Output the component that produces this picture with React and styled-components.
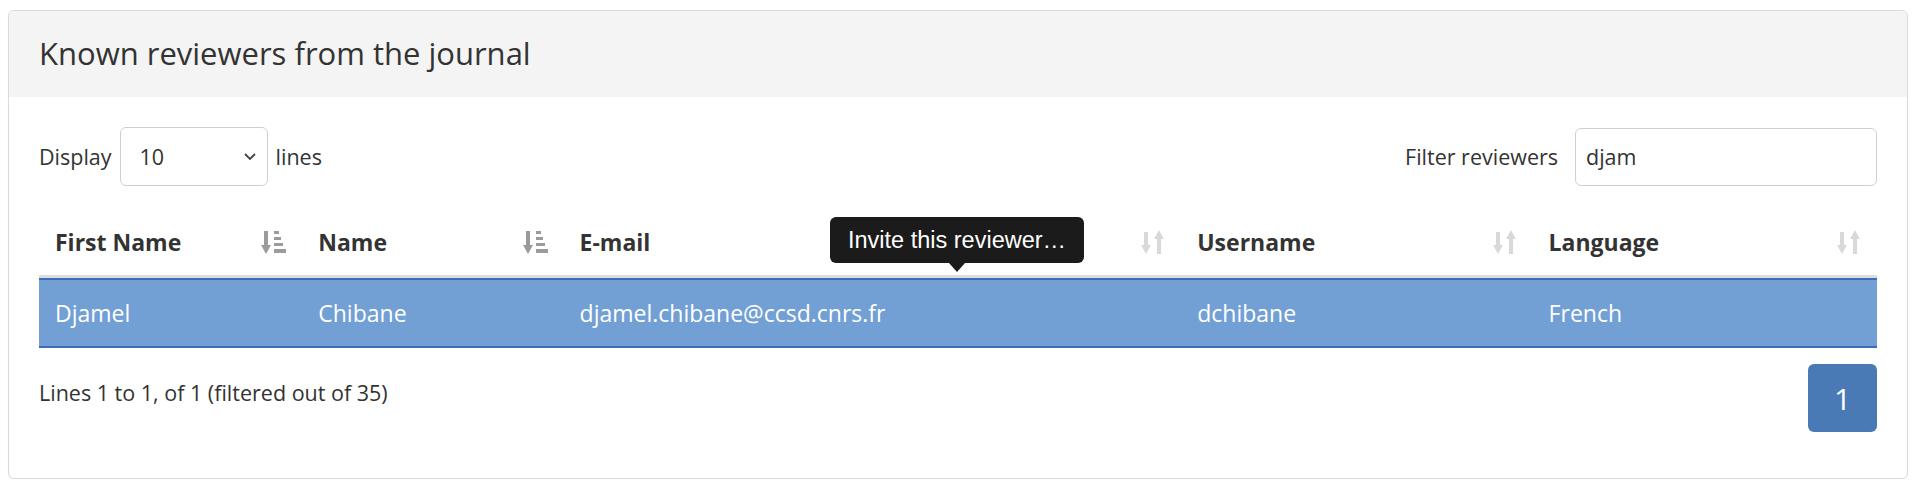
import React from "react";
import styled, { createGlobalStyle } from "styled-components";

const GlobalStyle = createGlobalStyle`
  body {
    margin: 0;
    background: #fff;
    font-family: "Open Sans", "Liberation Sans", sans-serif;
    color: #333;
  }
`;

const Card = styled.section`
  margin: 10px 8px 0 8px;
  height: 469px;
  box-sizing: border-box;
  border: 1.5px solid #dadada;
  border-radius: 6px;
  overflow: hidden;
  background: #fff;
  box-shadow: 0 1px 2px rgba(0, 0, 0, 0.04);
`;

const CardHeader = styled.header`
  height: 86px;
  box-sizing: border-box;
  padding: 0 30px 3px;
  display: flex;
  align-items: center;
  background: #f4f4f4;

  h2 {
    margin: 0;
    font-size: 31px;
    font-weight: 400;
    line-height: 36px;
    color: #333;
  }
`;

const CardBody = styled.div`
  padding: 30px 30px 0;
`;

const Controls = styled.div`
  display: flex;
  justify-content: space-between;
  align-items: center;
  height: 59px;
  font-size: 21.5px;
`;

const Group = styled.label`
  display: flex;
  align-items: center;
  gap: ${(p) => p.gap || 8}px;
`;

const Select = styled.div`
  width: 148px;
  height: 59px;
  box-sizing: border-box;
  border: 1.5px solid #cfcfcf;
  border-radius: 6px;
  padding: 0 10px 0 19px;
  display: flex;
  align-items: center;
  justify-content: space-between;
  color: #333;
`;

const Input = styled.input`
  width: 302px;
  height: 58px;
  box-sizing: border-box;
  border: 1.5px solid #cfcfcf;
  border-radius: 6px;
  padding: 0 10px;
  font-family: inherit;
  font-size: 21.5px;
  color: #333;
  outline: none;
`;

const TableWrap = styled.div`
  position: relative;
  margin-top: 23px;
`;

const Table = styled.table`
  width: 100%;
  table-layout: fixed;
  border-collapse: separate;
  border-spacing: 0;
  font-size: 23px;
`;

const Th = styled.th`
  position: relative;
  text-align: left;
  font-weight: 700;
  line-height: 36px;
  padding: 15px 48px 15px 16px;
  border-bottom: 3px solid #dddddd;
  color: #333;
  white-space: nowrap;
`;

const Td = styled.td`
  line-height: 36px;
  padding: 15px 16px;
  color: #fff;
  background: #72a0d4;
  border-top: 2px solid #3b6dbb;
  border-bottom: 2px solid #3b6dbb;
  white-space: nowrap;
`;

const SortSlot = styled.span`
  position: absolute;
  right: 16px;
  top: 50%;
  transform: translateY(-50%);
  display: flex;
`;

const Tooltip = styled.div`
  position: absolute;
  left: 791px;
  top: 8px;
  padding: 9px 18px;
  background: #1b1b1b;
  color: #fff;
  border-radius: 6px;
  font-family: "Liberation Sans", Arial, sans-serif;
  font-size: 23.5px;
  line-height: 28px;
  white-space: nowrap;

  &::after {
    content: "";
    position: absolute;
    left: 50%;
    bottom: -9px;
    transform: translateX(-50%);
    border-left: 8px solid transparent;
    border-right: 8px solid transparent;
    border-top: 9px solid #1b1b1b;
  }
`;

const Footer = styled.div`
  display: flex;
  justify-content: space-between;
  align-items: flex-start;
  margin-top: 16px;
`;

const Info = styled.div`
  padding-top: 13px;
  font-size: 21.5px;
  line-height: 31px;
  color: #333;
`;

const PageButton = styled.button`
  width: 69px;
  height: 68px;
  border: none;
  border-radius: 6px;
  background: #4a7ab5;
  color: #fff;
  font-family: inherit;
  font-size: 30px;
  display: flex;
  align-items: center;
  justify-content: center;
  padding: 0;
`;

const SortAsc = () => (
  <svg width="25" height="24" viewBox="0 0 25 24" fill="#9b9b9b">
    <rect x="3" y="1" width="4" height="15" />
    <polygon points="0,15 10,15 5,24" />
    <rect x="13" y="1" width="5" height="3" />
    <rect x="13" y="7" width="7" height="3" />
    <rect x="13" y="13" width="9" height="3" />
    <rect x="13" y="19" width="12" height="4" />
  </svg>
);

const SortBoth = () => (
  <svg width="24" height="24" viewBox="0 0 24 24" fill="#d9d9d9">
    <rect x="3" y="2" width="4" height="14" />
    <polygon points="0,15 10,15 5,24" />
    <polygon points="13,9 23,9 18,0" />
    <rect x="16" y="8" width="4" height="16" />
  </svg>
);

const Chevron = () => (
  <svg width="14" height="9" viewBox="0 0 14 9" fill="none" stroke="#444" strokeWidth="1.8">
    <polyline points="2,2 7,7 12,2" />
  </svg>
);

const columns = [
  { label: "First Name", width: 263, sorted: true },
  { label: "Name", width: 261, sorted: true },
  { label: "E-mail", width: 617 },
  { label: "Username", width: 351 },
  { label: "Language", width: 344 },
];

const row = ["Djamel", "Chibane", "djamel.chibane@ccsd.cnrs.fr", "dchibane", "French"];

export default function App() {
  return (
    <>
      <GlobalStyle />
      <Card>
        <CardHeader>
          <h2>Known reviewers from the journal</h2>
        </CardHeader>
        <CardBody>
          <Controls>
            <Group>
              Display
              <Select>
                <span>10</span>
                <Chevron />
              </Select>
              lines
            </Group>
            <Group gap={17}>
              Filter reviewers
              <Input defaultValue="djam" />
            </Group>
          </Controls>

          <TableWrap>
            <Table>
              <colgroup>
                {columns.map((c) => (
                  <col key={c.label} style={{ width: c.width }} />
                ))}
              </colgroup>
              <thead>
                <tr>
                  {columns.map((c) => (
                    <Th key={c.label}>
                      {c.label}
                      <SortSlot>{c.sorted ? <SortAsc /> : <SortBoth />}</SortSlot>
                    </Th>
                  ))}
                </tr>
              </thead>
              <tbody>
                <tr>
                  {row.map((v) => (
                    <Td key={v}>{v}</Td>
                  ))}
                </tr>
              </tbody>
            </Table>
            <Tooltip>Invite this reviewer…</Tooltip>
          </TableWrap>

          <Footer>
            <Info>Lines 1 to 1, of 1 (filtered out of 35)</Info>
            <PageButton>1</PageButton>
          </Footer>
        </CardBody>
      </Card>
    </>
  );
}
